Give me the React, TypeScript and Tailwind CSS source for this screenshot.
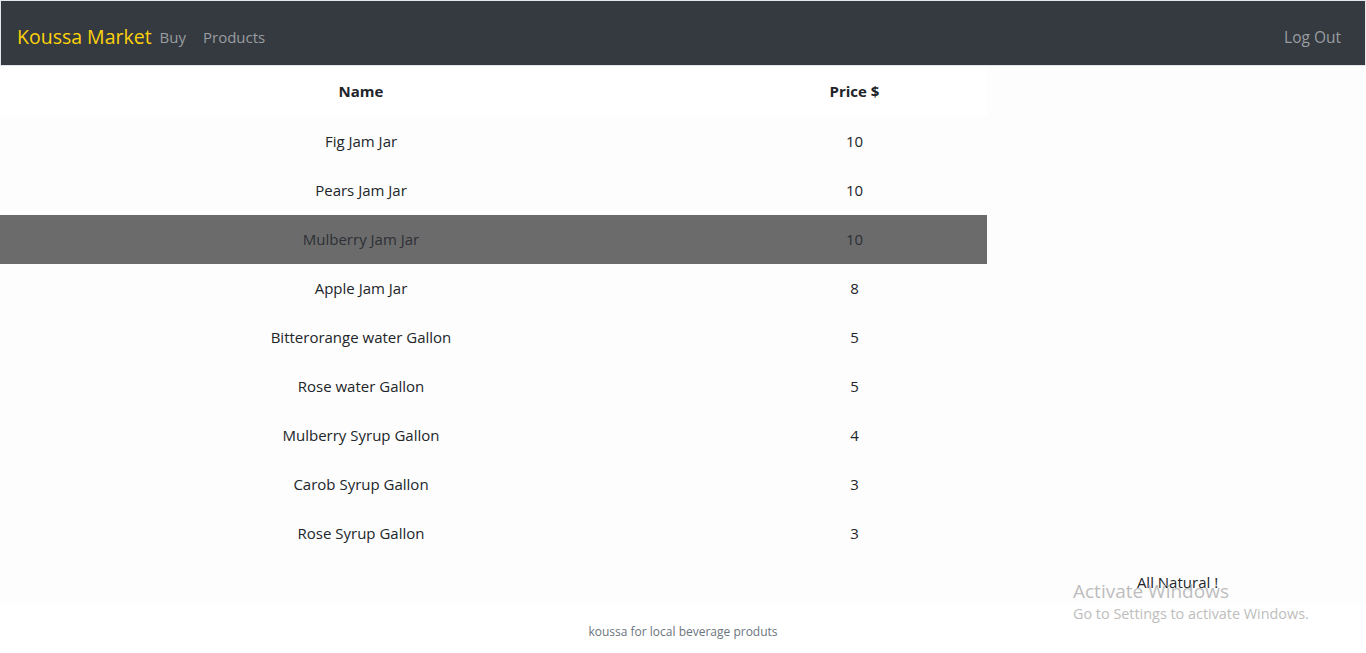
import React from 'react';

const products = [
  { name: 'Fig Jam Jar', price: 10 },
  { name: 'Pears Jam Jar', price: 10 },
  { name: 'Mulberry Jam Jar', price: 10 },
  { name: 'Apple Jam Jar', price: 8 },
  { name: 'Bitterorange water Gallon', price: 5 },
  { name: 'Rose water Gallon', price: 5 },
  { name: 'Mulberry Syrup Gallon', price: 4 },
  { name: 'Carob Syrup Gallon', price: 3 },
  { name: 'Rose Syrup Gallon', price: 3 },
];

export default function App() {
  const selected = 2;

  return (
    <div className="relative min-h-[653px] bg-white text-[#212529] font-['Open_Sans',sans-serif] overflow-hidden">
      {/* Navbar */}
      <nav className="h-[66px] bg-[#343a40] border border-[#e3e7ea] flex items-center px-4 pt-2">
        <a className="text-[19.5px] text-[#ffd20a] mr-2">Koussa Market</a>
        <a className="text-[15px] text-[#9a9da1] mr-[17px]">Buy</a>
        <a className="text-[15px] text-[#9a9da1]">Products</a>
        <a className="ml-auto text-[15.5px] text-[#9a9da1] mr-[8px] pt-[2px]">Log Out</a>
      </nav>

      <main className="h-[539px] bg-[#fdfdfd] flex">
        <table className="w-[987px] border-collapse text-[15px] self-start">
          <thead>
            <tr className="h-[51px] bg-white">
              <th className="w-[722px] font-bold">Name</th>
              <th className="font-bold">Price $</th>
            </tr>
          </thead>
          <tbody>
            {products.map((p, i) => (
              <tr key={p.name} className={i === selected ? 'h-[49px] bg-[#6b6b6b] text-[#2d3035]' : 'h-[49px]'}>
                <td className="text-center">{p.name}</td>
                <td className="text-center">{p.price}</td>
              </tr>
            ))}
          </tbody>
        </table>
        <div className="flex-1 flex flex-col justify-end pb-[12px]">
          <p className="text-center text-[15px] pl-[2px]">All Natural !</p>
        </div>
      </main>

      <footer className="h-[48px] pt-[19px] text-center text-[12px] leading-[16px] text-[#6c757d]">
        koussa for local beverage produts
      </footer>

      {/* Activate Windows watermark */}
      <div className="absolute left-[1073px] top-[578px] pointer-events-none text-[#bdbdbd]">
        <p className="text-[19px] leading-[26px]">Activate Windows</p>
        <p className="text-[14.4px] leading-[19px]">Go to Settings to activate Windows.</p>
      </div>
    </div>
  );
}
